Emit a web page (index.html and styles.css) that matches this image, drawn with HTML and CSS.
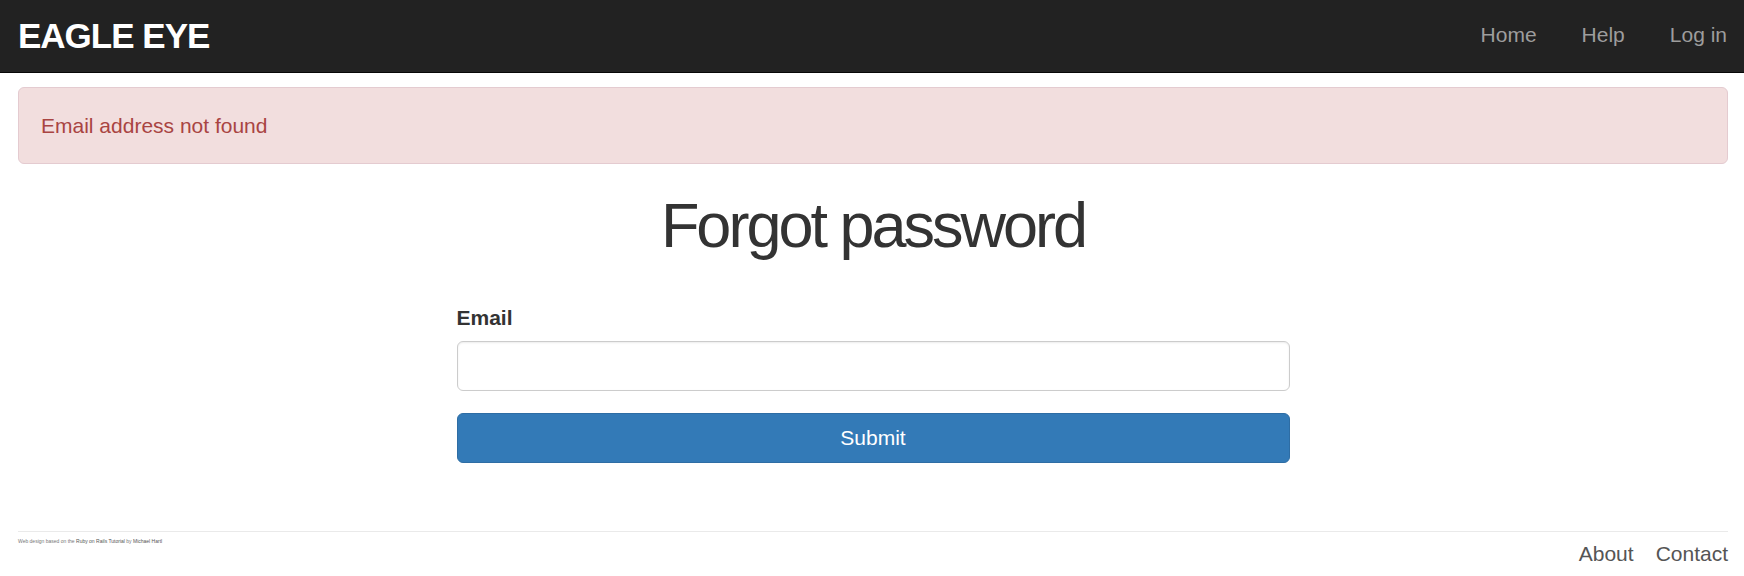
FILE: index.html
```html
<!DOCTYPE html>
<html lang="en">
<head>
<meta charset="utf-8">
<meta name="viewport" content="width=device-width, initial-scale=1">
<title>Forgot password | Eagle Eye</title>
<link rel="stylesheet" href="styles.css">
</head>
<body>
<header class="navbar">
  <a class="logo" href="#">EAGLE EYE</a>
  <nav class="nav-links">
    <a href="#">Home</a>
    <a href="#">Help</a>
    <a href="#">Log in</a>
  </nav>
</header>
<main class="page">
  <div class="alert" role="alert">Email address not found</div>
  <h1 class="title">Forgot password</h1>
  <form class="form">
    <label class="label" for="email">Email</label>
    <input class="input" type="email" id="email" name="email">
    <button class="submit" type="submit">Submit</button>
  </form>
  <footer class="footer">
    <small class="credit">Web design based on the <a href="#">Ruby on Rails Tutorial</a> by <a href="#">Michael Hartl</a></small>
    <nav class="footer-links">
      <a href="#">About</a>
      <a href="#">Contact</a>
    </nav>
  </footer>
</main>
</body>
</html>
```
FILE: styles.css
```css
* {
  box-sizing: border-box;
}

body {
  margin: 0;
  background: #fff;
  color: #333;
  font-family: "Liberation Sans", Arial, sans-serif;
  font-size: 21px;
  line-height: 30px;
}

a {
  color: inherit;
  text-decoration: none;
}

.navbar {
  display: flex;
  justify-content: space-between;
  align-items: center;
  padding: 17px 17px 17px 18px;
  background: #222;
  border-bottom: 1px solid #080808;
}

.logo {
  color: #fff;
  font-size: 35px;
  font-weight: bold;
  line-height: 38px;
  letter-spacing: -1px;
}

.nav-links {
  display: flex;
  gap: 45px;
  padding-bottom: 2px;
  color: #9d9d9d;
}

.page {
  padding: 14px 16px 0 18px;
}

.alert {
  padding: 23px 22px 22px;
  border: 1px solid #e4cbd0;
  border-radius: 6px;
  background: #f2dede;
  color: #a94442;
}

.title {
  margin: 30px 0 46px;
  font-size: 63px;
  font-weight: normal;
  line-height: 63px;
  letter-spacing: -3px;
  text-align: center;
}

.form {
  display: flex;
  flex-direction: column;
  width: calc(50% - 22px);
  margin: 0 auto;
}

.label {
  margin-bottom: 8px;
  font-weight: bold;
}

.input,
.submit {
  width: 100%;
  padding: 9px 18px;
  border: 1px solid #ccc;
  border-radius: 6px;
  font: inherit;
}

.input {
  margin-bottom: 22px;
  background: #fff;
  color: #555;
  box-shadow: inset 0 1px 2px rgba(0, 0, 0, 0.08);
}

.submit {
  border-color: #2e6da4;
  background: #337ab7;
  color: #fff;
  cursor: pointer;
}

.footer {
  display: flex;
  justify-content: space-between;
  margin-top: 68px;
  padding-top: 7px;
  border-top: 1px solid #eaeaea;
  color: #555;
}

.credit {
  color: #777;
  font-size: 5px;
  line-height: 5px;
}

.credit a {
  color: #555;
}

.footer-links {
  display: flex;
  gap: 22px;
}
```
